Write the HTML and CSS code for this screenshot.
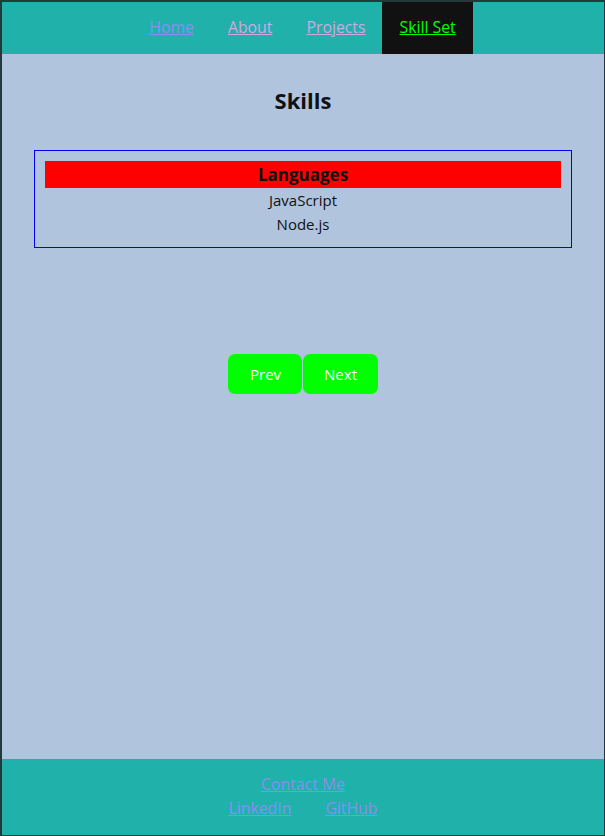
FILE: index.html
```html
<!DOCTYPE html>
<html lang="en">
<head>
<meta charset="utf-8">
<title>Skills</title>
<link rel="stylesheet" href="styles.css">
</head>
<body>
<div class="page">
  <nav class="nav">
    <a class="nav-link link-new" href="#">Home</a>
    <a class="nav-link link-seen" href="#">About</a>
    <a class="nav-link link-seen" href="#">Projects</a>
    <a class="nav-link active" href="#">Skill Set</a>
  </nav>
  <main class="main">
    <h1 class="title">Skills</h1>
    <section class="card">
      <h2 class="card-head">Languages</h2>
      <div class="card-item">JavaScript</div>
      <div class="card-item">Node.js</div>
    </section>
    <div class="pager">
      <button class="btn btn-prev">Prev</button>
      <button class="btn btn-next">Next</button>
    </div>
  </main>
  <footer class="footer">
    <a class="foot-link" href="#">Contact Me</a>
    <div class="foot-row">
      <a class="foot-link" href="#">LinkedIn</a>
      <a class="foot-link" href="#">GitHub</a>
    </div>
  </footer>
</div>
</body>
</html>
```
FILE: styles.css
```css
html, body {
  margin: 0;
  padding: 0;
  height: 100%;
}
body {
  background: #223a3a;
  font-family: "Open Sans", "Noto Sans", sans-serif;
  font-size: 15px;
  color: #111;
}
.page {
  box-sizing: border-box;
  height: 836px;
  border-style: solid;
  border-color: #24393a;
  border-width: 2px 1px 1px 2px;
  background: #b0c4de;
  display: flex;
  flex-direction: column;
}
.nav {
  background: #20b2aa;
  display: flex;
  justify-content: center;
  height: 52px;
  padding-right: 1px;
}
.nav-link {
  display: flex;
  align-items: center;
  padding: 0 17px 2px;
  font-size: 15.8px;
}
.link-new { color: #8a8ef0; }
.link-seen { color: #cfa8e6; }
.nav-link.active {
  background: #111111;
  color: #00ff00;
}
.main {
  flex: 1;
  display: flex;
  flex-direction: column;
  align-items: center;
}
.title {
  margin: 32px 0 0;
  font-size: 22px;
  line-height: 28px;
  font-weight: 700;
}
.card {
  box-sizing: border-box;
  align-self: stretch;
  margin: 36px 32px 0;
  border: 1px solid #0000ff;
  padding: 10px 10px 11px;
  text-align: center;
}
.card-head {
  margin: 0;
  background: #ff0000;
  font-size: 17px;
  font-weight: 700;
  line-height: 27px;
}
.card-item {
  line-height: 24px;
  font-size: 15px;
}
.pager {
  margin-top: 106px;
  display: flex;
  gap: 1px;
}
.btn {
  border: none;
  background: #00ff00;
  color: #ffffff;
  font-family: inherit;
  font-size: 15px;
  height: 40px;
  border-radius: 7px;
  padding: 0 21px;
}
.btn-prev { padding: 0 21px 0 22px; }
.footer {
  background: #20b2aa;
  height: 76px;
  box-sizing: border-box;
  padding-top: 13px;
  display: flex;
  flex-direction: column;
  align-items: center;
  line-height: 24px;
}
.foot-row {
  display: flex;
  gap: 34px;
}
.foot-link {
  color: #8a8ef0;
  font-size: 15.8px;
}
```
